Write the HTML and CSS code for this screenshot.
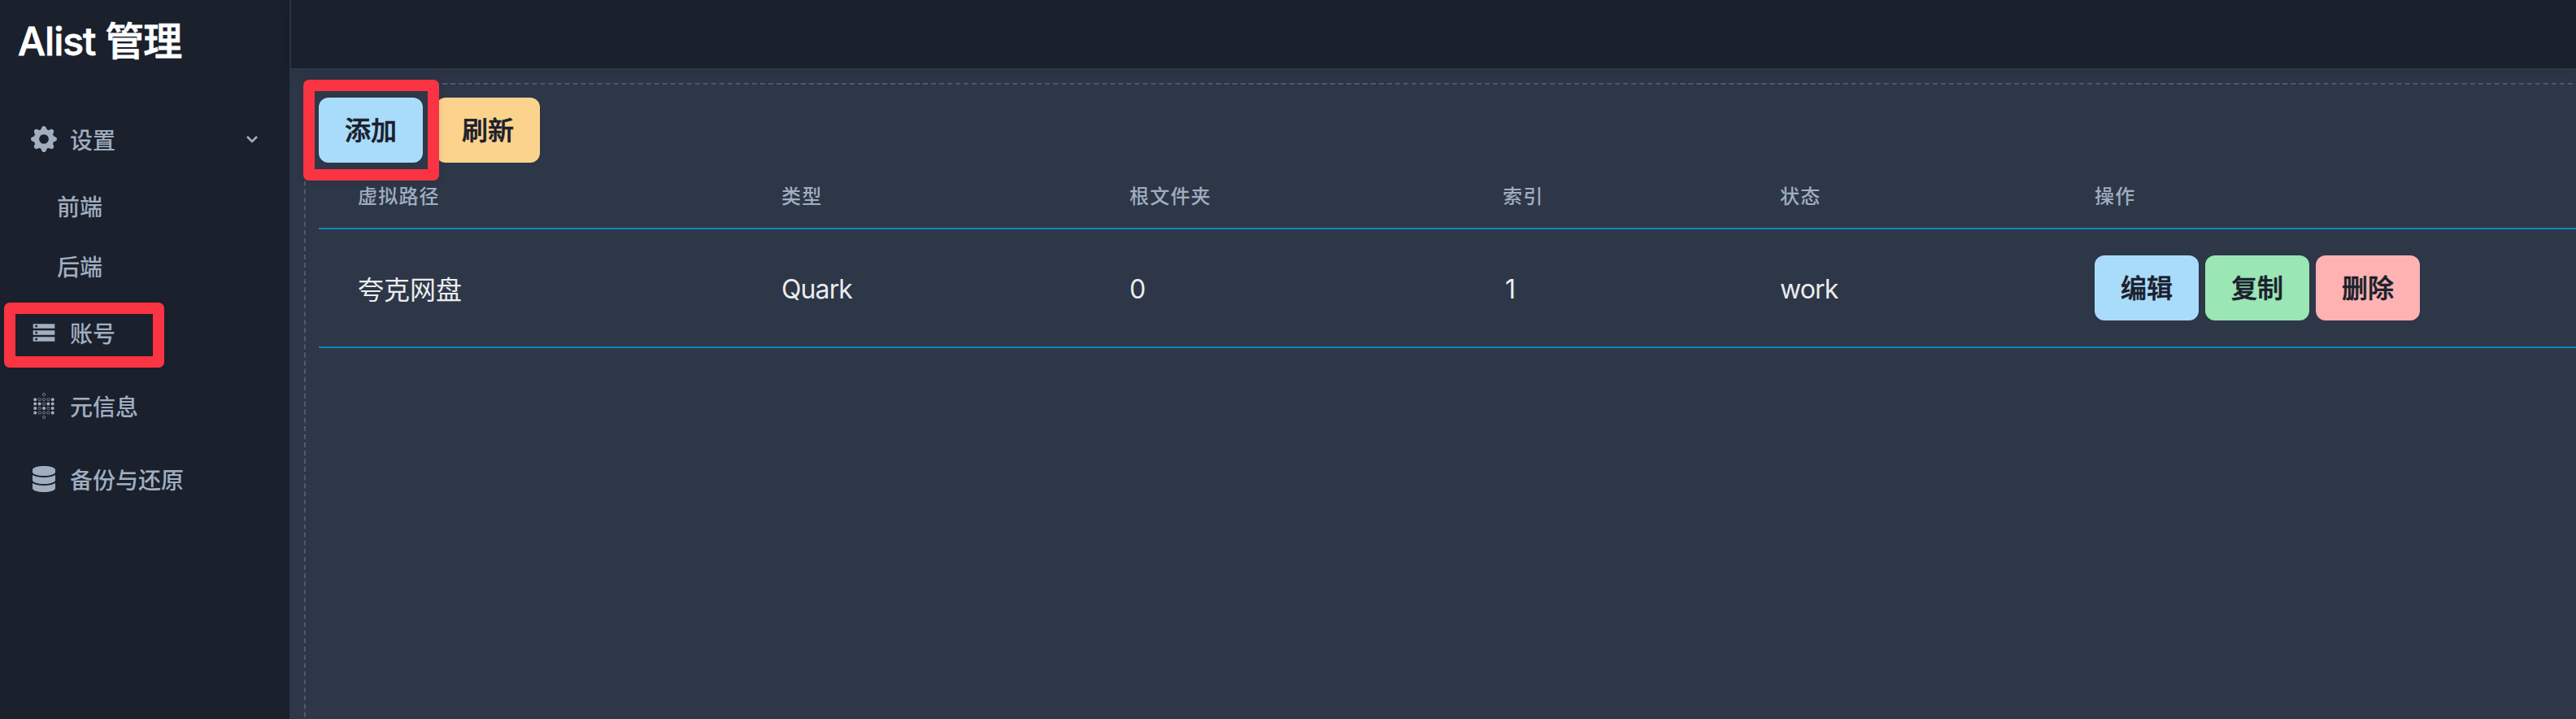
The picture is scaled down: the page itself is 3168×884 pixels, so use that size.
FILE: index.html
```html
<!DOCTYPE html>
<html lang="zh-CN">
<head>
<meta charset="utf-8">
<title>Alist 管理</title>
<link rel="stylesheet" href="styles.css">
</head>
<body>
<div class="app">
  <aside class="sidebar">
    <h1 class="brand">Alist 管理</h1>
    <nav class="menu">
      <a class="item">
        <svg class="icon" viewBox="0 0 16 16"><path d="M9.405 1.05c-.413-1.4-2.397-1.4-2.81 0l-.1.34a1.464 1.464 0 0 1-2.105.872l-.31-.17c-1.283-.698-2.686.705-1.987 1.987l.169.311c.446.82.023 1.841-.872 2.105l-.34.1c-1.4.413-1.4 2.397 0 2.81l.34.1a1.464 1.464 0 0 1 .872 2.105l-.17.31c-.698 1.283.705 2.686 1.987 1.987l.311-.169a1.464 1.464 0 0 1 2.105.872l.1.34c.413 1.4 2.397 1.4 2.81 0l.1-.34a1.464 1.464 0 0 1 2.105-.872l.31.17c1.283.698 2.686-.705 1.987-1.987l-.169-.311a1.464 1.464 0 0 1 .872-2.105l.34-.1c1.4-.413 1.4-2.397 0-2.81l-.34-.1a1.464 1.464 0 0 1-.872-2.105l.17-.31c.698-1.283-.705-2.686-1.987-1.987l-.311.169a1.464 1.464 0 0 1-2.105-.872l-.1-.34zM8 10.93a2.929 2.929 0 1 1 0-5.86 2.929 2.929 0 0 1 0 5.858z"/></svg>
        <span>设置</span>
        <svg class="chevron" viewBox="0 0 16 10"><path d="M2 2l6 6 6-6"/></svg>
      </a>
      <div class="submenu">
        <a class="subitem">前端</a>
        <a class="subitem">后端</a>
      </div>
      <a class="item">
        <svg class="icon" viewBox="0 0 24 24"><path d="M2 20h20v-4H2v4zm2-3h2v2H4v-2zM2 4v4h20V4H2zm4 3H4V5h2v2zm-4 7h20v-4H2v4zm2-3h2v2H4v-2z"/></svg>
        <span>账号</span>
        <i class="mark mark-account"></i>
      </a>
      <a class="item">
        <svg class="icon" viewBox="0 0 32 32">
          <g><circle cx="5.2" cy="8.2" r="2"/><circle cx="5.2" cy="13.6" r="2"/><circle cx="5.2" cy="19" r="2"/><circle cx="5.2" cy="24.5" r="2"/><circle cx="26.7" cy="8.2" r="2"/><circle cx="26.7" cy="13.6" r="2"/><circle cx="26.7" cy="19" r="2"/><circle cx="26.7" cy="24.5" r="2"/><circle cx="10.6" cy="13.6" r="2"/><circle cx="21.3" cy="13.6" r="2"/><circle cx="16" cy="19" r="2"/></g>
          <g class="ring"><circle cx="10.6" cy="8.2" r="1.6"/><circle cx="16" cy="8.2" r="1.6"/><circle cx="21.3" cy="8.2" r="1.6"/><circle cx="16" cy="13.6" r="1.6"/><circle cx="10.6" cy="19" r="1.6"/><circle cx="21.3" cy="19" r="1.6"/><circle cx="10.6" cy="24.5" r="1.6"/><circle cx="16" cy="24.5" r="1.6"/><circle cx="21.3" cy="24.5" r="1.6"/><circle cx="16" cy="2" r="1.6"/><circle cx="16" cy="30" r="1.6"/></g>
        </svg>
        <span>元信息</span>
      </a>
      <a class="item">
        <svg class="icon" viewBox="-32 0 512 512"><path d="M448 73.143v45.714C448 159.143 347.667 192 224 192S0 159.143 0 118.857V73.143C0 32.857 100.333 0 224 0s224 32.857 224 73.143zM448 176v102.857C448 319.143 347.667 352 224 352S0 319.143 0 278.857V176c48.125 33.143 136.208 48.572 224 48.572S399.874 209.143 448 176zm0 160v102.857C448 479.143 347.667 512 224 512S0 479.143 0 438.857V336c48.125 33.143 136.208 48.572 224 48.572S399.874 369.143 448 336z"/></svg>
        <span>备份与还原</span>
      </a>
    </nav>
  </aside>
  <div class="main">
    <header class="topbar"></header>
    <section class="content">
      <div class="panel">
        <div class="toolbar">
          <button class="btn blue">添加</button>
          <button class="btn orange">刷新</button>
          <i class="mark mark-add"></i>
        </div>
        <table class="table">
          <colgroup><col class="c1"><col class="c2"><col class="c3"><col class="c4"><col class="c5"><col></colgroup>
          <thead><tr><th>虚拟路径</th><th>类型</th><th>根文件夹</th><th>索引</th><th>状态</th><th>操作</th></tr></thead>
          <tbody><tr>
            <td>夸克网盘</td><td class="latin">Quark</td><td class="latin">0</td><td class="latin index">1</td><td class="latin">work</td>
            <td><div class="actions"><button class="btn blue">编辑</button><button class="btn green">复制</button><button class="btn red">删除</button></div></td>
          </tr></tbody>
        </table>
      </div>
    </section>
  </div>
</div>
</body>
</html>
```
FILE: styles.css
```css
* { box-sizing: border-box; }
body {
  margin: 0;
  background: #1a202c;
  color: rgba(255, 255, 255, 0.92);
  font-family: Inter, "Noto Sans CJK SC", sans-serif;
  font-size: 32px;
}
.app { display: flex; height: 884px; overflow: hidden; }

.sidebar {
  flex: none;
  width: 358px;
  border-right: 2px solid #2d3748;
  background: #1a202c;
}
.brand {
  margin: 0;
  height: 100px;
  padding-left: 22px;
  line-height: 102px;
  font-size: 48px;
  font-weight: 500;
  letter-spacing: -1px;
  -webkit-text-stroke: 0.8px #fff;
  color: #fff;
  white-space: nowrap;
}
.menu { display: flex; flex-direction: column; padding-top: 26px; }
.item {
  position: relative;
  display: flex;
  align-items: center;
  height: 90px;
  padding: 0 38px;
  gap: 16px;
  color: #a0aec0;
  font-size: 28px;
  font-weight: 500;
}
.icon { width: 32px; height: 32px; fill: #a0aec0; }
.ring { fill: none; stroke: #a0aec0; stroke-width: 0.8; opacity: 0.8; }
.chevron {
  width: 16px;
  height: 10px;
  margin-left: auto;
  fill: none;
  stroke: #a0aec0;
  stroke-width: 2.6;
}
.submenu { height: 148px; }
.subitem {
  display: flex;
  align-items: center;
  height: 74px;
  padding-left: 70px;
  color: #a0aec0;
  font-size: 28px;
  font-weight: 500;
}

.mark {
  position: absolute;
  border: 14px solid #fa3442;
  border-radius: 7px;
  box-shadow: 0 1px 8px rgba(0, 0, 0, 0.1);
}
.mark-account { left: 5px; top: 8px; width: 197px; height: 80px; }
.mark-add { left: -19px; top: -22px; width: 167px; height: 124px; }

.main { flex: 1; min-width: 0; display: flex; flex-direction: column; }
.topbar {
  position: relative;
  flex: none;
  height: 86px;
  border-bottom: 2px solid #2d3748;
  background: #1a202c;
  box-shadow: 0 2px 20px rgba(0, 0, 0, 0.15);
}
.content {
  flex: 1;
  padding: 16px 0 0 16px;
  background: #2d3748;
  overflow: hidden;
}
.panel {
  width: 2900px;
  height: 900px;
  padding: 16px;
  border: 2px dashed #4f5968;
}
.toolbar { position: relative; display: flex; gap: 16px; }
.btn {
  width: 128px;
  height: 80px;
  padding: 2px 0 0;
  border: 0;
  border-radius: 12px;
  color: #1a202c;
  font: 500 32px/78px Inter, "Noto Sans CJK SC", sans-serif;
  -webkit-text-stroke: 0.6px #1a202c;
}
.blue { background: #a9dcfb; }
.orange { background: #fbd38d; }
.green { background: #9ae6b4; }
.red { background: #feb2b2; }

.table { width: 2864px; border-collapse: separate; border-spacing: 0; table-layout: fixed; }
.c1 { width: 521px; }
.c2 { width: 428px; }
.c3 { width: 459px; }
.c4 { width: 341px; }
.c5 { width: 387px; }
.table th {
  height: 82px;
  padding: 0 48px 2px;
  border-bottom: 2px solid #1a80c0;
  text-align: left;
  font-size: 24px;
  font-weight: 500;
  letter-spacing: 1.2px;
  color: #a0aec0;
}
.table td {
  height: 146px;
  padding: 0 48px;
  border-bottom: 2px solid #1a80c0;
  text-align: left;
}
.table .latin { padding-top: 2px; letter-spacing: -0.9px; }
.table .index { padding-left: 51px; }
.actions { display: flex; gap: 8px; }
```
